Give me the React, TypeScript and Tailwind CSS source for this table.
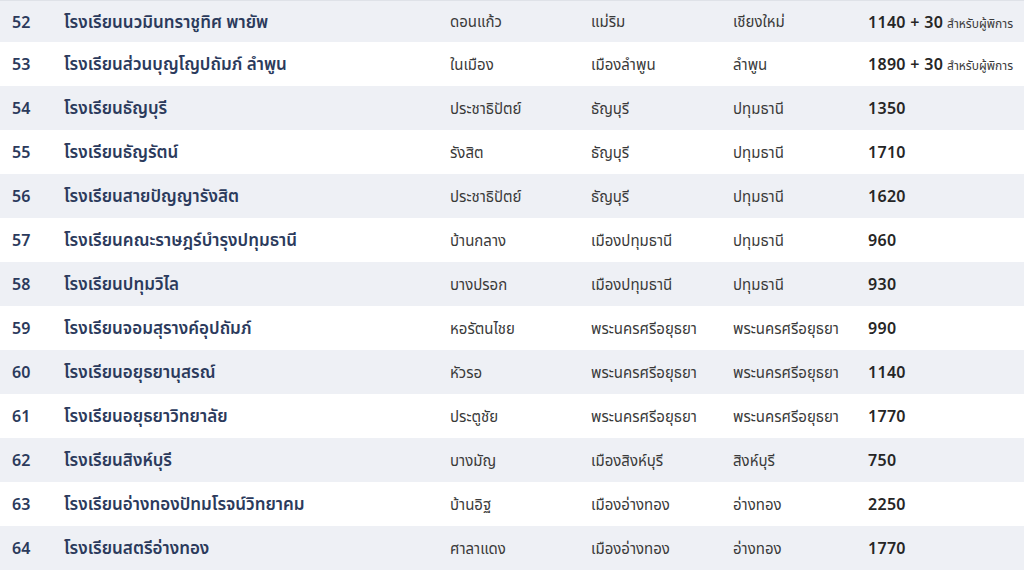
import React from "react";

type Row = {
  no: number;
  name: string;
  tambon: string;
  amphoe: string;
  province: string;
  seats: string;
  extra?: string;
};

const rows: Row[] = [
  { no: 52, name: "โรงเรียนนวมินทราชูทิศ พายัพ", tambon: "ดอนแก้ว", amphoe: "แม่ริม", province: "เชียงใหม่", seats: "1140 + 30", extra: "สำหรับผู้พิการ" },
  { no: 53, name: "โรงเรียนส่วนบุญโญปถัมภ์ ลำพูน", tambon: "ในเมือง", amphoe: "เมืองลำพูน", province: "ลำพูน", seats: "1890 + 30", extra: "สำหรับผู้พิการ" },
  { no: 54, name: "โรงเรียนธัญบุรี", tambon: "ประชาธิปัตย์", amphoe: "ธัญบุรี", province: "ปทุมธานี", seats: "1350" },
  { no: 55, name: "โรงเรียนธัญรัตน์", tambon: "รังสิต", amphoe: "ธัญบุรี", province: "ปทุมธานี", seats: "1710" },
  { no: 56, name: "โรงเรียนสายปัญญารังสิต", tambon: "ประชาธิปัตย์", amphoe: "ธัญบุรี", province: "ปทุมธานี", seats: "1620" },
  { no: 57, name: "โรงเรียนคณะราษฎร์บำรุงปทุมธานี", tambon: "บ้านกลาง", amphoe: "เมืองปทุมธานี", province: "ปทุมธานี", seats: "960" },
  { no: 58, name: "โรงเรียนปทุมวิไล", tambon: "บางปรอก", amphoe: "เมืองปทุมธานี", province: "ปทุมธานี", seats: "930" },
  { no: 59, name: "โรงเรียนจอมสุรางค์อุปถัมภ์", tambon: "หอรัตนไชย", amphoe: "พระนครศรีอยุธยา", province: "พระนครศรีอยุธยา", seats: "990" },
  { no: 60, name: "โรงเรียนอยุธยานุสรณ์", tambon: "หัวรอ", amphoe: "พระนครศรีอยุธยา", province: "พระนครศรีอยุธยา", seats: "1140" },
  { no: 61, name: "โรงเรียนอยุธยาวิทยาลัย", tambon: "ประตูชัย", amphoe: "พระนครศรีอยุธยา", province: "พระนครศรีอยุธยา", seats: "1770" },
  { no: 62, name: "โรงเรียนสิงห์บุรี", tambon: "บางมัญ", amphoe: "เมืองสิงห์บุรี", province: "สิงห์บุรี", seats: "750" },
  { no: 63, name: "โรงเรียนอ่างทองปัทมโรจน์วิทยาคม", tambon: "บ้านอิฐ", amphoe: "เมืองอ่างทอง", province: "อ่างทอง", seats: "2250" },
  { no: 64, name: "โรงเรียนสตรีอ่างทอง", tambon: "ศาลาแดง", amphoe: "เมืองอ่างทอง", province: "อ่างทอง", seats: "1770" },
];

export default function App() {
  return (
    <main
      className="w-[1024px] h-[573px] overflow-hidden bg-white border-t border-[#dfe2e8]"
      style={{ fontFamily: '"Noto Sans", "Noto Sans Thai", sans-serif' }}
    >
      <table className="w-full table-fixed border-collapse">
        <colgroup>
          <col className="w-[52px]" />
          <col className="w-[386px]" />
          <col className="w-[141px]" />
          <col className="w-[142px]" />
          <col className="w-[135px]" />
          <col />
        </colgroup>
        <tbody>
          {rows.map((r, i) => (
            <tr
              key={r.no}
              className={
                (i % 2 === 0 ? "bg-[#eef0f5] " : "bg-white ") +
                (i === 0 ? "h-[41px]" : "h-[44px]")
              }
            >
              <td className="pl-3 text-[16px] font-semibold text-[#2b3a5c] whitespace-nowrap">
                {r.no}
              </td>
              <td className="pl-3 text-[17px] font-semibold text-[#2b3a5c] whitespace-nowrap">
                {r.name}
              </td>
              <td className="pl-3 text-[15px] text-[#3a3a3a] whitespace-nowrap">
                {r.tambon}
              </td>
              <td className="pl-3 text-[15px] text-[#3a3a3a] whitespace-nowrap">
                {r.amphoe}
              </td>
              <td className="pl-3 text-[15px] text-[#3a3a3a] whitespace-nowrap">
                {r.province}
              </td>
              <td className="pl-3 whitespace-nowrap text-[#262626]">
                <span className="text-[16px] font-semibold tracking-[0.3px]">{r.seats}</span>
                {r.extra && (
                  <span className="ml-1 text-[12px] text-[#3a3a3a]">{r.extra}</span>
                )}
              </td>
            </tr>
          ))}
        </tbody>
      </table>
    </main>
  );
}
